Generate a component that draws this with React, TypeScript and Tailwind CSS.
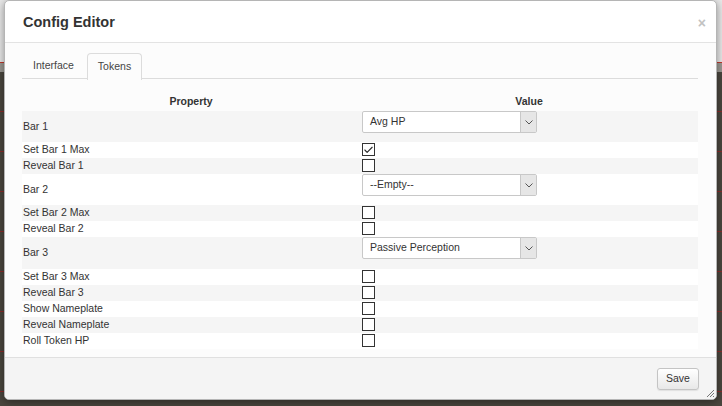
import { Check } from 'lucide-react'

type Row =
  | { label: string; kind: 'select'; value: string; h: string }
  | { label: string; kind: 'check'; checked?: boolean }

const rows: Row[] = [
  { label: 'Bar 1', kind: 'select', value: 'Avg HP', h: 'h-[31px]' },
  { label: 'Set Bar 1 Max', kind: 'check', checked: true },
  { label: 'Reveal Bar 1', kind: 'check' },
  { label: 'Bar 2', kind: 'select', value: '--Empty--', h: 'h-[31px]' },
  { label: 'Set Bar 2 Max', kind: 'check' },
  { label: 'Reveal Bar 2', kind: 'check' },
  { label: 'Bar 3', kind: 'select', value: 'Passive Perception', h: 'h-[32px]' },
  { label: 'Set Bar 3 Max', kind: 'check' },
  { label: 'Reveal Bar 3', kind: 'check' },
  { label: 'Show Nameplate', kind: 'check' },
  { label: 'Reveal Nameplate', kind: 'check' },
  { label: 'Roll Token HP', kind: 'check' },
]

function FakeSelect({ value }: { value: string }) {
  return (
    <div className="flex h-[22px] w-[175px] items-stretch rounded-[2px] border border-[#c8c8c8] bg-white">
      <span className="flex flex-1 items-center pl-[7px] text-[10.5px] text-[#333]">{value}</span>
      <span className="flex w-[16px] items-center justify-center border-l border-[#c8c8c8] bg-[#e6e6e6]">
        <svg width="8" height="5" viewBox="0 0 8 5" fill="none">
          <path d="M0.5 0.5 L4 4 L7.5 0.5" stroke="#555" strokeWidth="1" />
        </svg>
      </span>
    </div>
  )
}

function Box({ checked }: { checked?: boolean }) {
  return (
    <div className="mt-[1px] flex h-[13px] w-[13px] items-center justify-center border border-[#333] bg-white">
      {checked && <Check size={12} strokeWidth={2.4} color="#2a2a2a" />}
    </div>
  )
}

export default function App() {
  return (
    <div className="relative h-[406px] w-[722px] overflow-hidden" style={{ fontFamily: '"Liberation Sans", Arial, sans-serif' }}>
      {/* page behind the dialog */}
      <div className="flex h-full flex-col">
        <div className="h-[62px] bg-[#e8e8e8]" />
        <div className="h-px bg-[#c0392b]" />
        <div className="h-[9px] bg-[#9b9892]" />
        <div className="flex-1 bg-[#4a463e] bg-[repeating-linear-gradient(180deg,transparent_0px,transparent_39px,#8a2a2a_39px,#8a2a2a_40px)]" />
      </div>

      {/* dialog */}
      <div className="absolute left-[4px] top-0 flex h-[400px] w-[713px] flex-col overflow-hidden rounded-[5px] border border-[#b5b5b5] bg-white shadow-[0_2px_8px_rgba(0,0,0,0.4)]">
        <div className="flex h-[42px] shrink-0 items-center justify-between border-b border-[#e3e3e3] pl-[18px] pr-[10px] pt-[3px]">
          <span className="text-[14.5px] font-bold text-[#333]">Config Editor</span>
          <span className="text-[14px] font-bold leading-none text-[#c2c2c2]">×</span>
        </div>

        <div className="h-[314px] shrink-0 bg-[#fcfcfc] pl-[17px] pr-[18px] pt-[10px]">
          <div className="flex h-[26px] border-b border-[#dcdcdc]">
            <div className="mr-[2px] flex h-[26px] items-center px-[11px] text-[10.5px] text-[#444]">Interface</div>
            <div className="-mb-px flex h-[27px] items-center rounded-t-[4px] border border-b-0 border-[#dcdcdc] bg-[#fcfcfc] px-[10px] text-[10.5px] text-[#444]">
              Tokens
            </div>
          </div>

          <div className="mt-[14px] w-[676px]">
            <div className="grid h-[18px] grid-cols-2 items-center text-[10.5px] font-bold text-[#333]">
              <div className="text-center">Property</div>
              <div className="text-center">Value</div>
            </div>
            {rows.map((r, i) => (
              <div
                key={r.label}
                className={`grid grid-cols-2 ${r.kind === 'select' ? r.h : 'h-[16px]'} ${i % 2 === 0 ? 'bg-[#f5f5f5]' : 'bg-white'}`}
              >
                <div className="flex items-center pl-[1px] text-[10.5px] text-[#333]">{r.label}</div>
                <div className="flex items-start pl-[2px]">
                  {r.kind === 'select' ? <FakeSelect value={r.value} /> : <Box checked={r.checked} />}
                </div>
              </div>
            ))}
          </div>
        </div>

        <div className="relative flex flex-1 items-start justify-end border-t border-[#e0e0e0] bg-[#f4f4f4] pr-[17px] pt-[10px]">
          <button className="h-[22px] w-[42px] rounded-[3px] border border-[#c4c4c4] bg-gradient-to-b from-white to-[#e8e8e8] text-[10.5px] text-[#333] shadow-[0_1px_1px_rgba(0,0,0,0.08)]">
            Save
          </button>
          <svg className="absolute bottom-[1px] right-[1px]" width="10" height="10" viewBox="0 0 10 10">
            <path d="M9 2 L2 9 M9 5 L5 9 M9 8 L8 9" stroke="#777" strokeWidth="1" />
          </svg>
        </div>
      </div>
    </div>
  )
}
